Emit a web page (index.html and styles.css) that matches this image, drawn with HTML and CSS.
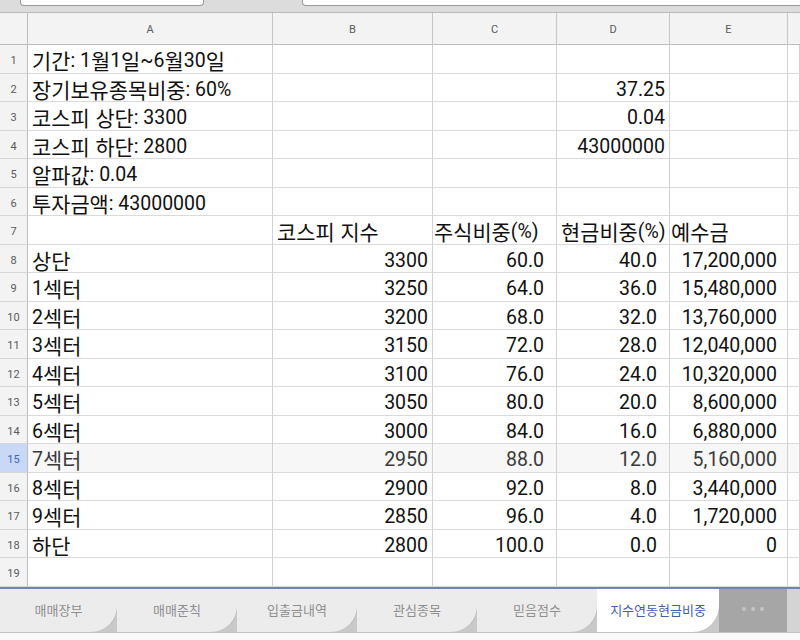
FILE: index.html
```html
<!DOCTYPE html>
<html lang="ko">
<head>
<meta charset="utf-8">
<link rel="stylesheet" href="styles.css">
</head>
<body>
<div class="app">
  <div class="topbar">
    <div class="box box1"></div>
    <div class="box box2"></div>
  </div>
  <div class="sheet">
    <div class="corner"></div><div class="ch">A</div><div class="ch">B</div><div class="ch">C</div><div class="ch">D</div><div class="ch">E</div><div class="ch last"></div>

    <div class="rh">1</div><div class="c"><span class="k">기간</span>: 1<span class="k">월</span>1<span class="k">일</span>~6<span class="k">월</span>30<span class="k">일</span></div><div class="c"></div><div class="c"></div><div class="c"></div><div class="c"></div><div class="c"></div>
    <div class="rh">2</div><div class="c"><span class="k">장기보유종목비중</span>: 60%</div><div class="c"></div><div class="c"></div><div class="c r">37.25</div><div class="c"></div><div class="c"></div>
    <div class="rh">3</div><div class="c"><span class="k">코스피 상단</span>: 3300</div><div class="c"></div><div class="c"></div><div class="c r">0.04</div><div class="c"></div><div class="c"></div>
    <div class="rh">4</div><div class="c"><span class="k">코스피 하단</span>: 2800</div><div class="c"></div><div class="c"></div><div class="c r">43000000</div><div class="c"></div><div class="c"></div>
    <div class="rh">5</div><div class="c"><span class="k">알파값</span>: 0.04</div><div class="c"></div><div class="c"></div><div class="c"></div><div class="c"></div><div class="c"></div>
    <div class="rh">6</div><div class="c"><span class="k">투자금액</span>: 43000000</div><div class="c"></div><div class="c"></div><div class="c"></div><div class="c"></div><div class="c"></div>
    <div class="rh">7</div><div class="c"></div><div class="c"><span class="k">코스피 지수</span></div><div class="c tight"><span class="k">주식비중</span>(%)</div><div class="c"><span class="k">현금비중</span>(%)</div><div class="c tight"><span class="k">예수금</span></div><div class="c"></div>
    <div class="rh">8</div><div class="c"><span class="k">상단</span></div><div class="c r">3300</div><div class="c r f">60.0</div><div class="c r f">40.0</div><div class="c r fe">17,200,000</div><div class="c"></div>
    <div class="rh">9</div><div class="c">1<span class="k">섹터</span></div><div class="c r">3250</div><div class="c r f">64.0</div><div class="c r f">36.0</div><div class="c r fe">15,480,000</div><div class="c"></div>
    <div class="rh">10</div><div class="c">2<span class="k">섹터</span></div><div class="c r">3200</div><div class="c r f">68.0</div><div class="c r f">32.0</div><div class="c r fe">13,760,000</div><div class="c"></div>
    <div class="rh">11</div><div class="c">3<span class="k">섹터</span></div><div class="c r">3150</div><div class="c r f">72.0</div><div class="c r f">28.0</div><div class="c r fe">12,040,000</div><div class="c"></div>
    <div class="rh">12</div><div class="c">4<span class="k">섹터</span></div><div class="c r">3100</div><div class="c r f">76.0</div><div class="c r f">24.0</div><div class="c r fe">10,320,000</div><div class="c"></div>
    <div class="rh">13</div><div class="c">5<span class="k">섹터</span></div><div class="c r">3050</div><div class="c r f">80.0</div><div class="c r f">20.0</div><div class="c r fe">8,600,000</div><div class="c"></div>
    <div class="rh">14</div><div class="c">6<span class="k">섹터</span></div><div class="c r">3000</div><div class="c r f">84.0</div><div class="c r f">16.0</div><div class="c r fe">6,880,000</div><div class="c"></div>
    <div class="rh sel">15</div><div class="c s">7<span class="k">섹터</span></div><div class="c s r">2950</div><div class="c s r f">88.0</div><div class="c s r f">12.0</div><div class="c s r fe">5,160,000</div><div class="c s"></div>
    <div class="rh">16</div><div class="c">8<span class="k">섹터</span></div><div class="c r">2900</div><div class="c r f">92.0</div><div class="c r f">8.0</div><div class="c r fe">3,440,000</div><div class="c"></div>
    <div class="rh">17</div><div class="c">9<span class="k">섹터</span></div><div class="c r">2850</div><div class="c r f">96.0</div><div class="c r f">4.0</div><div class="c r fe">1,720,000</div><div class="c"></div>
    <div class="rh">18</div><div class="c"><span class="k">하단</span></div><div class="c r">2800</div><div class="c r f">100.0</div><div class="c r f">0.0</div><div class="c r fe">0</div><div class="c"></div>
    <div class="rh">19</div><div class="c"></div><div class="c"></div><div class="c"></div><div class="c"></div><div class="c"></div><div class="c"></div>
  </div>
  <div class="tabs">
    <div class="tab"><span class="face">매매장부</span></div>
    <div class="tab"><span class="face">매매준칙</span></div>
    <div class="tab"><span class="face">입출금내역</span></div>
    <div class="tab"><span class="face">관심종목</span></div>
    <div class="tab"><span class="face">믿음점수</span></div>
    <div class="tab active"><span class="face">지수연동현금비중</span></div>
    <div class="more"><span class="dot"></span><span class="dot"></span><span class="dot"></span></div>
    <div class="rest"></div>
  </div>
  <div class="bottom"></div>
</div>
</body>
</html>
```

FILE: styles.css
```css
* { box-sizing: border-box; }
html, body { margin: 0; padding: 0; background: #fff; }
body { width: 800px; height: 640px; overflow: hidden; font-family: Roboto, "Noto Sans CJK KR", sans-serif; }

.app { display: flex; flex-direction: column; width: 800px; height: 640px; }

.topbar {
  height: 13px;
  background: #dcdcdc;
  border-bottom: 1px solid #b9b9b9;
  display: flex;
  align-items: flex-start;
}
.box {
  height: 6px;
  background: #fff;
  border: 1px solid #9a9a9a;
  border-top: none;
  border-radius: 0 0 4px 4px;
}
.box1 { margin-left: 20px; width: 184px; }
.box2 { margin-left: 98px; flex: 1; border-right: none; border-radius: 0 0 0 4px; }

.sheet {
  display: grid;
  grid-template-columns: 28px 245px 160px 124px 113px 118px 12px;
  grid-template-rows: 32px repeat(19, 28.5px);
  font-size: 19.5px;
  color: #111;
}
.corner, .ch, .rh {
  background: #f3f3f3;
  color: #5a5a5a;
  font-size: 11px;
  display: flex;
  align-items: center;
  justify-content: center;
}
.corner { border-right: 1px solid #bdbdbd; border-bottom: 1px solid #bdbdbd; }
.ch { border-right: 1px solid #c6c6c6; border-bottom: 1px solid #bdbdbd; padding-top: 1px; }
.ch.last { border-right: none; }
.rh { border-right: 1px solid #bdbdbd; border-bottom: 1px solid #d6d6d6; padding-top: 4px; }
.rh.sel { background: #c8d8f6; color: #3f66c0; }

.c {
  border-right: 1px solid #d2d2d2;
  border-bottom: 1px solid #dadada;
  padding: 4px 4px 0;
  white-space: nowrap;
  overflow: visible;
  display: flex;
  align-items: center;
  line-height: 1;
}
.c.r { justify-content: flex-end; }
.c.f { padding-right: 12px; }
.c.fe { padding-right: 10px; }
.c.tight { padding-left: 1px; }
.c.s { background: #f7f7f7; color: #3a3a3a; }
.k { font-family: "Noto Sans CJK KR", sans-serif; font-size: 1.07em; }

.tabs {
  height: 46px;
  border-top: 2px solid #6f86b3;
  border-bottom: 1px solid #c2c2c2;
  display: flex;
  background: #d2d2d2;
}
.tab {
  width: 120px;
  background: #c9c9c9;
  display: flex;
}
.tab:first-child { width: 117px; }
.tab .face {
  flex: 1;
  background: #ececec;
  border-bottom-right-radius: 26px;
  box-shadow: 1px 0 0 #bdbdbd;
  display: flex;
  align-items: center;
  justify-content: center;
  font-family: "Noto Sans CJK KR", sans-serif;
  font-size: 13px;
  color: #8e8e8e;
  padding-bottom: 2px;
}
.tab.active { width: 122px; }
.tab.active .face { background: #fff; color: #3d5fae; }
.more {
  width: 68px;
  background: #a6a6a6;
  display: flex;
  align-items: center;
  justify-content: center;
  gap: 5px;
  padding-bottom: 2px;
}
.dot { width: 4px; height: 4px; border-radius: 50%; background: #c4c4c4; }
.rest { flex: 1; background: #d4d4d4; }
.bottom { flex: 1; background: #fafafa; }
```
